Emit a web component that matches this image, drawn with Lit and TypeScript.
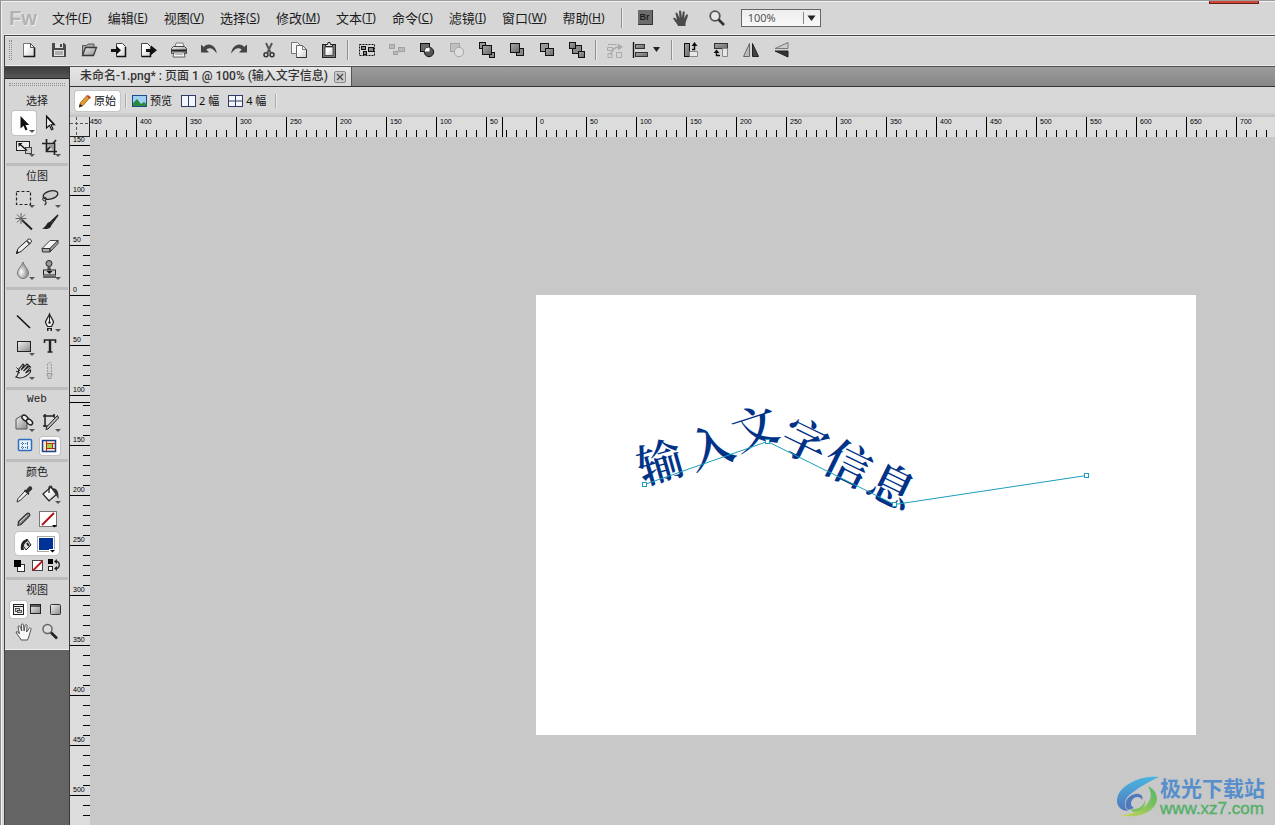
import { LitElement, html, css, svg, SVGTemplateResult, TemplateResult } from "lit";
import { customElement, state } from "lit/decorators.js";

type Art = SVGTemplateResult;

/* ---------- toolbar artwork, 20 x 20 ---------- */
const BAR: Record<string, Art> = {
  new: svg`<path d="M4.5 3.5h7l4 4v9h-11z" fill="url(#paper)" stroke="#777"/><path d="M15.5 7.5v9h-11" fill="none" stroke="#1a1a1a" stroke-width="1.6"/><path d="M11.5 3.5v4h4z" fill="#eee" stroke="#333" stroke-width=".8"/>`,
  save: svg`<path d="M3 3h12l2 2v12H3z" fill="#4a4a4a"/><rect x="6" y="3" width="8" height="5" fill="#ddd"/><rect x="11" y="4" width="2" height="3" fill="#444"/><rect x="5" y="10" width="10" height="6" fill="#e4e4e4"/><path d="M6 12h8M6 14h8" stroke="#777"/>`,
  open: svg`<path d="M3.5 15.5V5.5h4l1.5-1.5h6v3" fill="#aaa" stroke="#555"/><path d="M3.5 15.5l3-8h11l-3 8z" fill="url(#steel)" stroke="#3a3a3a" stroke-width="1.3"/>`,
  import: svg`<path d="M7.5 3.5h6l3 3v10h-9z" fill="url(#paper)" stroke="#444"/><path d="M16.5 7v9.5h-9" fill="none" stroke="#111" stroke-width="1.5"/><path d="M2 9h5V5.5l5 4.8-5 4.7V12H2z" fill="#111"/>`,
  export: svg`<path d="M2.5 3.5h6l3 3v10h-9z" fill="url(#paper)" stroke="#444"/><path d="M11.5 12v4.5h-9" fill="none" stroke="#111" stroke-width="1.5"/><path d="M7 9h5V5.5l6 4.8-6 4.7V12H7z" fill="#111"/>`,
  print: svg`<path d="M6 7l1-4h7l1 4z" fill="#f2f2f2" stroke="#666" stroke-width=".8"/><path d="M2.5 8.500l2-2h11l2 2v5h-15z" fill="url(#steel)" stroke="#444"/><path d="M3 10.5h14" stroke="#222" stroke-width="2"/><path d="M5 12h10l1 5H4z" fill="#f4f4f4" stroke="#444" stroke-width=".8"/><path d="M6 14h8" stroke="#888"/>`,
  undo: svg`<path d="M2 4.5v8h8L7.3 9.6C10.5 6.8 14 8 17.8 13.5 17 6 10 1.5 4.8 7z" fill="#454545"/>`,
  redo: svg`<path d="M18 4.5v8h-8l2.7-2.9C9.5 6.800 6 8 2.2 13.5 3 6 10 1.5 15.2 7z" fill="#454545"/>`,
  cut: svg`<path d="M7 3l4.5 9.5M13 3L8.5 12.5" stroke="#555" stroke-width="1.9"/><circle cx="7" cy="14.8" r="2" fill="none" stroke="#333" stroke-width="1.5"/><circle cx="13" cy="14.8" r="2" fill="none" stroke="#333" stroke-width="1.5"/>`,
  copy: svg`<path d="M2.5 2.5h6l3 3v8h-9z" fill="#f4f4f4" stroke="#777"/><path d="M7.5 5.5h6l4 4v8h-10z" fill="url(#paper)" stroke="#666"/><path d="M17.5 9.5v8h-10" fill="none" stroke="#333"/><path d="M13.5 5.5v4h4" fill="none" stroke="#777"/>`,
  paste: svg`<rect x="3.5" y="4.5" width="13" height="13" fill="#777" stroke="#222"/><path d="M6 7h8v8.500H6z" fill="url(#paper)" stroke="#333" stroke-width=".8"/><path d="M6.5 6.5v-2h2l.5-2h2l.5 2h2v2z" fill="#ddd" stroke="#222"/>`,
  group: svg`<rect x="2.5" y="4.5" width="15" height="11" fill="none" stroke="#111" stroke-dasharray="2 1"/><rect x="4.5" y="6.5" width="4" height="3" fill="#888" stroke="#111"/><rect x="11.5" y="7.5" width="5" height="4" fill="#888" stroke="#111"/><rect x="6.5" y="11.5" width="3" height="3" fill="#888" stroke="#111"/>`,
  ungroup: svg`<g fill="#b9b9b9" stroke="#a2a2a2"><rect x="2.5" y="4.5" width="5" height="4"/><rect x="11.5" y="7.5" width="6" height="4"/><rect x="6.5" y="11.5" width="4" height="3"/></g>`,
  join: svg`<rect x="3.5" y="3.5" width="9" height="8" fill="#6a6a6a" stroke="#111"/><circle cx="12" cy="12" r="4.7" fill="#555" stroke="#111"/><path d="M7.5 11.5A4.7 4.7 0 0 1 12.5 7.5v4z" fill="#fff"/>`,
  split: svg`<rect x="3.5" y="3.5" width="9" height="8" fill="#c0c0c0" stroke="#a4a4a4"/><circle cx="12" cy="12" r="4.7" fill="#dedede" stroke="#a4a4a4"/>`,
  front: svg`<g stroke="#111"><rect x="2.5" y="2.5" width="6" height="6" fill="#999"/><rect x="12.5" y="12.5" width="5" height="5" fill="#888"/><rect x="5.5" y="5.5" width="9" height="9" fill="url(#steel2)"/></g>`,
  forward: svg`<g stroke="#111"><rect x="9.5" y="8.5" width="7" height="7" fill="#888"/><rect x="3.5" y="3.5" width="9" height="9" fill="url(#steel2)"/></g>`,
  backward: svg`<g stroke="#111"><rect x="3.5" y="3.5" width="8" height="8" fill="#999"/><rect x="8.5" y="8.5" width="8" height="7" fill="url(#steel2)"/></g>`,
  back: svg`<g stroke="#111"><rect x="5.5" y="5.5" width="9" height="8" fill="#888"/><rect x="2.5" y="2.5" width="6" height="6" fill="url(#steel2)"/><rect x="11.5" y="11.5" width="6" height="6" fill="url(#steel2)"/></g>`,
  redraw: svg`<g fill="none" stroke="#aaa"><path d="M3 4.5h9M2.5 7.5h5v3h-5zM3 13.5h4v4H3zM11.5 12.5h5v5h-5z"/><path d="M6 15c1-6 4-8 8-8" stroke-width="1.5"/></g><path d="M13 3.5l5 3.5-5 3.5z" fill="#aaa"/>`,
  align: svg`<path d="M3.500 2v16" stroke="#111" stroke-width="1.4"/><rect x="5.5" y="4.5" width="9" height="4" fill="url(#steel2)" stroke="#333"/><rect x="5.5" y="12.5" width="12" height="4" fill="url(#steel2)" stroke="#333"/>`,
  cw: svg`<rect x="3.5" y="3.5" width="5" height="13" fill="url(#steel2)" stroke="#111"/><path d="M8.5 11.5h8v5h-8" fill="#e8e8e8" stroke="#888"/><path d="M11 9.5h2.5V5" fill="none" stroke="#111" stroke-width="1.5"/><path d="M10.5 6l3-4 3 4z" fill="#111"/>`,
  ccw: svg`<rect x="3.5" y="3.5" width="13" height="5" fill="url(#steel2)" stroke="#333"/><path d="M11.5 8.5h5v8h-5z" fill="#e8e8e8" stroke="#888"/><path d="M9 15.5H5.5V12" fill="none" stroke="#111" stroke-width="1.5"/><path d="M2.500 13l3-3.5 3 3.5z" fill="#111"/>`,
  fliph: svg`<path d="M8.5 3.5v13h-6z" fill="#bbb" stroke="#666"/><path d="M11.5 3.5v13h6z" fill="#444" stroke="#222"/>`,
  flipv: svg`<path d="M17 2.5v6H4z" fill="#ccc" stroke="#777"/><path d="M17 17v-6H4z" fill="#333" stroke="#222"/>`,
};

/* ---------- tool palette artwork, 24 x 24 ---------- */
const more = svg`<path d="M17 19h6l-3 3z" fill="#555"/>`;
const TOOL: Record<string, Art> = {
  pointer: svg`<path d="M8.5 5v12.5l3-2.7 2 4.7 2-.9-2-4.6h3.7z" fill="#111"/>${more}`,
  subselect: svg`<path d="M8.5 5v12l3-2.7 2 4.4 1.5-.7-2-4.3h3.5z" fill="#eee" stroke="#111" stroke-width="1.1"/><path d="M9 6l7 7.5" stroke="#111" stroke-width="1.5"/>`,
  scale: svg`<rect x="4.5" y="6.5" width="13" height="9" fill="#ececec" stroke="#222"/><rect x="13.5" y="12.5" width="6" height="6" fill="#ccc" stroke="#444"/><path d="M7 8.5l8 7" stroke="#111" stroke-width="1.3"/><path d="M6.5 8v4l4-4z" fill="#111"/>${more}`,
  crop: svg`<path d="M8.5 4v12.5H19M4 8.5h12.5V20M8 16.5L18 5" fill="none" stroke="#222" stroke-width="1.7"/><path d="M9 9h7v7z" fill="#999"/>${more}`,
  marquee: svg`<rect x="4.5" y="5.5" width="14" height="13" fill="none" stroke="#222" stroke-width="1.2" stroke-dasharray="3 2"/>${more}`,
  lasso: svg`<ellipse cx="12.5" cy="9" rx="7.5" ry="4" transform="rotate(-14 12.5 9)" fill="#ccc" stroke="#222" stroke-width="1.3"/><circle cx="6.5" cy="13" r="1.8" fill="none" stroke="#222"/><path d="M7 15c2 1 1 3-.5 4" fill="none" stroke="#222" stroke-width="1.2"/>${more}`,
  wand: svg`<path d="M10 10l10 9.5" stroke="#222" stroke-width="2"/><path d="M9 3v11M3.5 8.500h11M5 4.5l8 8M13 4.5l-8 8" stroke="#555" stroke-width=".9"/>`,
  brush: svg`<path d="M20 5l-8 7.5 1.5 1.5z" fill="#777" stroke="#222" stroke-width="1.3"/><path d="M12 12c-4 0-3 5-8 6.5 5 1.500 10-.5 9.500-4.5z" fill="#222"/>`,
  pencil: svg`<path d="M4.5 19.5l1.5-5L16 5.5c2-1.500 4.500 1 3 3L9 17.500z" fill="#eee" stroke="#222"/><path d="M4 20l1-3.5 2 2z" fill="#111"/><path d="M15 7l3 3" stroke="#333" stroke-width="1.500"/>`,
  eraser: svg`<path d="M4 14.5L12 6.5h8l-8 8z" fill="#f4f4f4" stroke="#444"/><path d="M4 14.5h8V18H4.500zM12 14.500l8-8v3L12 18z" fill="#aaa" stroke="#333"/>`,
  blur: svg`<path d="M11 4c1 4 5.5 7 5.5 11a5.5 5.500 0 0 1-11 0C5.5 11 10 8 11 4z" fill="url(#drop)" stroke="#777"/>${more}`,
  stamp: svg`<circle cx="11" cy="5.5" r="3" fill="#999" stroke="#222"/><path d="M9.8 8.5h2.4L13 12H9z" fill="#555"/><rect x="5.5" y="12" width="12" height="5" fill="#ccc" stroke="#222"/><path d="M8.500 13h6l-3 3z" fill="#111"/><path d="M5 19h13" stroke="#222" stroke-width="1.3"/>${more}`,
  line: svg`<path d="M5 5.5L18 18" stroke="#111" stroke-width="1.6"/>`,
  pen: svg`<path d="M11.5 4C10 8 7.500 10 7.500 12.500l2 4h4l2-4C15.500 10 13 8 11.5 4z" fill="#eee" stroke="#222" stroke-width="1.2"/><path d="M11.500 5v7" stroke="#222"/><circle cx="11.5" cy="12.5" r="1.2" fill="#222"/><path d="M9 18v3h1.500v-2h2v2H14v-3z" fill="#222"/>${more}`,
  rect: svg`<rect x="5.500" y="7.500" width="13" height="10" fill="url(#steel)" stroke="#222"/>${more}`,
  text: svg`<path d="M6.500 9V6h11v3M9.500 18h5" stroke="#222" stroke-width="1.6" fill="none"/><path d="M12 6v12" stroke="#222" stroke-width="2.4"/>`,
  freeform: svg`<path d="M4 19c3-2 2-6 3-8l4-5 1 1-3 5 6-6 1.500 1-5 6 6-5 1 1-5 6 5-3v2c-4 5-7 6-11 6z" fill="#ddd" stroke="#222" stroke-width="1.1"/><path d="M4.500 9.500l3.500 3.500M4 13l4 2" stroke="#222"/>${more}`,
  knife: svg`<path d="M9.500 6.500c0-2 4-3 4-1v10h-4z" fill="#d0d0d0" stroke="#9a9a9a" stroke-dasharray="2 1"/><path d="M9 15.500h5v2h-1v3h-3v-3H9z" fill="#ccc" stroke="#9a9a9a"/>`,
  hotspot: svg`<path d="M4 9l5-3 3 1v4h3v8H4z" fill="url(#steel)" stroke="#555"/><ellipse cx="13" cy="8" rx="3.5" ry="2.3" transform="rotate(40 13 8)" fill="#eee" stroke="#222" stroke-width="1.4"/><ellipse cx="17.5" cy="12" rx="3.5" ry="2.3" transform="rotate(40 17.5 12)" fill="#eee" stroke="#222" stroke-width="1.4"/>${more}`,
  slice: svg`<path d="M5 6h12M7 4v13M5 16h5M16 4v4" stroke="#222" stroke-width="1.5"/><path d="M8 7h8l-7 8z" fill="#ddd"/><path d="M19.500 5.500l1 2.500L10 19l-2 .5.500-2.500z" fill="#bbb" stroke="#222"/>${more}`,
  hidehot: svg`<rect x="6.500" y="5.500" width="13" height="11" rx="1" fill="#e9f3fb" stroke="#2f6fc0" stroke-width="1.5"/><path d="M9 9.500h8M9 13.500h8M10.500 8v7M15.500 8v7" stroke="#3d6d9c" stroke-dasharray="1 1"/>`,
  showhot: svg`<rect x="4.500" y="6.500" width="13" height="11" fill="#f4e9c9" stroke="#1f3f8c" stroke-width="1.5"/><path d="M8.500 7v10M14.500 9v6M9 9.500h8M9 14.500h8" stroke="#b02a1c"/><rect x="9" y="10" width="5" height="4" fill="#a5cf4b"/>`,
  dropper: svg`<path d="M5 20l1-3.500 7-7.500 2.500 2.500-7.500 7z" fill="#eee" stroke="#333"/><path d="M12 8.500l4.500 4.500 1-1.500-.7-1L20 7.500c1-2-1-4-3-3L14 8l-1-.5z" fill="#333"/>`,
  bucket: svg`<path d="M5 12l8-7 6 7-8 7z" fill="url(#paper)" stroke="#222" stroke-width="1.2"/><path d="M11 11V5.500c0-2 3-2 3 0" fill="none" stroke="#222" stroke-width="1.2"/><path d="M13 6c6 0 8 3 7.500 11L18 13z" fill="#333"/>${more}`,
  stroke: svg`<path d="M6 18.500l.5-4L15 6.500c2-1 3.500.5 2.500 2.500L9 17.500z" fill="#8a8a8a" stroke="#333" stroke-width="1.2"/><path d="M8 15l7-6.500" stroke="#ddd"/>`,
  nostroke: svg`<rect x="1.500" y="4.500" width="17" height="15" fill="#fff" stroke="#777"/><path d="M4 18L16 6" stroke="#b5121b" stroke-width="2"/><path d="M14 18h5l-2.500 2.500z" fill="#000"/>`,
  fill: svg`<path d="M8 12l5-5 4 6-5 5z" fill="#ddd" stroke="#222"/><path d="M7 18c-1-7 2-10 6-11l1 2c-4 2-5 5-4 9z" fill="#222"/><path d="M13 11l2 3" stroke="#222" stroke-width="2"/>`,
  fillcolor: svg`<rect x="1.500" y="4.500" width="17" height="15" fill="#fff" stroke="#aaa"/><rect x="3" y="6" width="14" height="12" fill="#003399"/><path d="M13 17h6v4h-6z" fill="#fff"/><path d="M14 18h5l-2.500 2.500z" fill="#000"/>`,
  default: svg`<rect x="5.500" y="7.500" width="7" height="7" fill="#fff" stroke="#333"/><rect x="2" y="3" width="7" height="7" fill="#000"/>`,
  none: svg`<rect x="3.500" y="3.500" width="10" height="10" fill="#fff" stroke="#444"/><path d="M4 13.500L13.500 4" stroke="#c01818" stroke-width="1.8"/>`,
  swap: svg`<rect x="2" y="2" width="5" height="5" fill="#000"/><rect x="2.500" y="9.500" width="4" height="4" fill="#fff" stroke="#222"/><path d="M9.500 4.500c5-1 5 7 0 7" fill="none" stroke="#222" stroke-width="1.3"/><path d="M11 2v5L8 4.500zM11 9v5l-3-2.500z" fill="#222"/>`,
  screen1: svg`<rect x="3.500" y="3.500" width="10" height="10" fill="#eee" stroke="#222"/><path d="M4 5.500h9" stroke="#222"/><rect x="5.500" y="7.500" width="4" height="3" fill="#ccc" stroke="#333" stroke-width=".8"/><rect x="7.500" y="9.500" width="4" height="2" fill="#ccc" stroke="#333" stroke-width=".8"/>`,
  screen2: svg`<rect x="3.500" y="3.500" width="10" height="9" fill="url(#steel)" stroke="#222"/><path d="M4 5h9" stroke="#333" stroke-width="1.5"/>`,
  screen3: svg`<rect x="3.500" y="3.500" width="10" height="10" rx="1" fill="url(#steel)" stroke="#333"/>`,
  hand: svg`<path d="M9 20c-1-3-4-5-5-8 1.500-1 2.500.5 3.500 2L6 7c0-1.500 1.800-1.500 2.200 0l1.600 4-.5-6c0-1.500 2-1.500 2.200 0l.6 6 1-5.500c.3-1.400 2.100-1 2 .5l-.5 6 2.500-3.500c.7-1.300 2.200-.6 1.900 1L17 16l-1.500 4z" fill="#f8f8f8" stroke="#555" stroke-width="1"/>`,
  zoom: svg`<circle cx="9.500" cy="9" r="4.500" fill="#ddd" stroke="#666" stroke-width="1.500"/><path d="M13 12.500l6 6" stroke="#222" stroke-width="2.600"/>`,
};

interface ToolDef { icon: string; name: string; on?: boolean }
interface Section { title: string; cls: string; rows: ToolDef[][] }
const t = (icon: string, name: string, on = false): ToolDef => ({ icon, name, on });

const SECTIONS: Section[] = [
  { title: "选择", cls: "pick", rows: [[t("pointer", "指针", true), t("subselect", "部分选定")], [t("scale", "缩放"), t("crop", "裁剪")]] },
  { title: "位图", cls: "bitmap", rows: [[t("marquee", "选取框"), t("lasso", "套索")], [t("wand", "魔术棒"), t("brush", "刷子")], [t("pencil", "铅笔"), t("eraser", "橡皮擦")], [t("blur", "模糊"), t("stamp", "橡皮图章")]] },
  { title: "矢量", cls: "vector", rows: [[t("line", "直线"), t("pen", "钢笔")], [t("rect", "矩形"), t("text", "文本")], [t("freeform", "自由变形"), t("knife", "刀子")]] },
  { title: "Web", cls: "web", rows: [[t("hotspot", "热点"), t("slice", "切片")], [t("hidehot", "隐藏切片"), t("showhot", "显示切片", true)]] },
  { title: "颜色", cls: "colour", rows: [[t("dropper", "滴管"), t("bucket", "油漆桶")], [t("stroke", "笔触"), t("nostroke", "笔触颜色")], [t("fill", "填充"), t("fillcolor", "填充颜色")], [t("default", "默认颜色"), t("none", "无"), t("swap", "交换颜色")]] },
  { title: "视图", cls: "view", rows: [[t("screen1", "标准屏幕", true), t("screen2", "带菜单的全屏"), t("screen3", "全屏")], [t("hand", "手形"), t("zoom", "缩放")]] },
];

const MENUS: [string, string][] = [
  ["文件", "F"], ["编辑", "E"], ["视图", "V"], ["选择", "S"], ["修改", "M"],
  ["文本", "T"], ["命令", "C"], ["滤镜", "I"], ["窗口", "W"], ["帮助", "H"],
];

const BAR_GROUPS: [string, string][][] = [
  [["new", "新建"], ["save", "保存"], ["open", "打开"], ["import", "导入"], ["export", "导出"], ["print", "打印"], ["undo", "撤消"], ["redo", "重做"], ["cut", "剪切"], ["copy", "复制"], ["paste", "粘贴"]],
  [["group", "分组"], ["ungroup", "取消分组"], ["join", "接合"], ["split", "拆分"], ["front", "移到最前"], ["forward", "上移"], ["backward", "下移"], ["back", "移到最后"]],
  [["redraw", "重绘路径"], ["align", "对齐"]],
  [["cw", "顺时针旋转"], ["ccw", "逆时针旋转"], ["fliph", "水平翻转"], ["flipv", "垂直翻转"]],
];

/* ruler labels, one per 50 px cell */
const steps = (from: number, count: number) =>
  Array.from({ length: Math.max(count, 0) }, (_, i) => Math.abs(from + i * 50));

/* glyph, centre x, centre y, angle on the canvas */
const PATH_TEXT: [string, number, number, number][] = [
  ["输", 124, 167, -16], ["入", 175, 152, -17], ["文", 219, 133, -18],
  ["字", 269, 146, 26], ["信", 312, 169, 26], ["息", 356, 191, 26],
];
const ANCHORS: [number, number][] = [[108, 189], [231, 146], [358, 209], [550, 180]];

@customElement("app-root")
export class AppRoot extends LitElement {
  @state() private view = "原始";
  @state() private winW = window.innerWidth;
  @state() private winH = window.innerHeight;

  private onResize = () => { this.winW = window.innerWidth; this.winH = window.innerHeight; };
  connectedCallback() { super.connectedCallback(); window.addEventListener("resize", this.onResize); }
  disconnectedCallback() { window.removeEventListener("resize", this.onResize); super.disconnectedCallback(); }

  static styles = css`
    :host {
      display: flex; flex-direction: column; height: 100vh; position: relative;
      background: #d6d6d6; color: #1c1c1c; overflow: hidden; box-sizing: border-box;
      border-top: 1px solid #9d9d9d; border-left: 1px solid #8f8f8f; padding-left: 3px;
      font: 11px/18px "Noto Sans", "Noto Sans CJK SC", sans-serif;
      box-shadow: inset 1px 1px 0 #f2f2f2;
    }
    button { font: inherit; color: inherit; background: none; border: 0; padding: 0; margin: 0; display: flex; align-items: center; justify-content: center; }
    svg { display: block; flex: none; }
    .defs { position: absolute; }
    .close { position: absolute; top: 0; right: 16px; width: 50px; height: 3px; background: #d0483a; border: solid #6a201a; border-width: 0 1px 1px; box-sizing: border-box; }

    .menubar { display: flex; align-items: center; height: 34px; flex: none; box-sizing: border-box; padding-left: 5px; border-bottom: 1px solid #f2f2f2; }
    .logo { font: bold 20px/24px "Liberation Sans", sans-serif; color: #b2b2b2; width: 43px; text-shadow: 1px 1px 0 #eee; }
    .menus { display: flex; gap: 16px; }
    .menus button { font-size: 13px; line-height: 20px; white-space: nowrap; }
    .key { font-size: 12px; }
    .sep { width: 1px; height: 20px; background: #8f8f8f; box-shadow: 1px 0 0 #ececec; flex: none; }
    .menubar .sep { margin-left: 16px; }
    .apps { display: flex; gap: 16px; margin: 0 14px 0 14px; }
    .br { display: block; width: 15px; height: 15px; background: #6c6c6c; color: #1e1e1e; font: bold 9px/15px "Liberation Sans", sans-serif; text-align: center; margin: 3px 2px; border-right: 1px solid #333; border-bottom: 1px solid #333; box-sizing: border-box; }
    .zoom { position: relative; width: 80px; height: 18px; }
    .zoom select { appearance: none; width: 100%; height: 18px; border: 1px solid #666; border-radius: 0; background: linear-gradient(#eee, #f8f8f8); font: 11px/16px "Noto Sans", sans-serif; color: #555; padding: 0 0 0 6px; margin: 0; display: block; box-sizing: border-box; }
    .zoom svg { position: absolute; right: 1px; top: 1px; pointer-events: none; }

    .frame { flex: 1; min-height: 0; display: flex; flex-direction: column; border-left: 1px solid #444; border-top: 1px solid #444; }
    .toolbar { display: flex; align-items: center; height: 31px; box-sizing: border-box; flex: none; padding: 0 0 2px 4px; border-bottom: 1px solid #505050; box-shadow: inset 0 1px 0 #ececec, inset 0 -1px 0 #ececec; }
    .grip { width: 1px; height: 20px; border: dotted #8d8d8d; border-width: 0 1px; margin-right: 2px; }
    .group { display: flex; }
    .group button { width: 30px; height: 26px; }
    .group .wide { width: 38px; justify-content: flex-start; gap: 1px; }
    .toolbar .sep { margin: 0 4px 0 3px; }

    .body { flex: 1; min-height: 0; display: flex; }
    .side { width: 64px; flex: none; background: #646464; border-right: 1px solid #3a3a3a; display: flex; flex-direction: column; }
    .cap { height: 11px; background: linear-gradient(#3c3c3c, #575757); border-bottom: 1px solid #222; flex: none; }
    .palette { background: #d6d6d6; border-bottom: 1px solid #f0f0f0; padding-top: 4px; }
    .dots { height: 1px; margin: 0 4px 5px; border: dotted #8d8d8d; border-width: 1px 0; }
    .section { display: flex; flex-direction: column; align-items: center; border-bottom: 3px solid #bdbdbd; padding-bottom: 5px; margin: 0 1px; }
    .section.pick { padding-bottom: 4px; }
    .section.web { padding-bottom: 1px; }
    .section.colour { padding-bottom: 3px; }
    .section.view { border: 0; }
    .section h2 { margin: 0 0 2px; height: 18px; font: 11px/18px "Noto Sans CJK SC", sans-serif; }
    .section.web h2 { font-family: "Liberation Mono", monospace; }
    .row { display: flex; height: 24px; align-items: center; }
    .row button { width: 24px; height: 24px; margin: 0 1px; border-radius: 3px; }
    .row .on { background: #fff; box-shadow: 0 0 0 1px #c2c2c2; }
    .web .row .on { height: 18px; width: 20px; margin: 0 3px; }
    .colour .row { height: 25px; }
    .colour .row:nth-of-type(1) { height: 24px; }
    .colour .picked { background: #fff; border-radius: 4px; box-shadow: 0 0 0 1px #c4c4c4; height: 23px; margin: 1px 0; }
    .colour .picked button { margin: 0; width: 22px; }
    .row.three { height: 20px; }
    .colour .row.three { height: 18px; }
    .row.three button { width: 17px; height: 17px; margin: 0; }
    .view .three { height: 19px; margin-bottom: 1px; }
    .view .three button:last-child { margin-left: 3px; }

    .main { flex: 1; min-width: 0; display: flex; flex-direction: column; }
    .tabs { height: 19px; flex: none; display: flex; background: linear-gradient(#9c9c9c, #868686); border-bottom: 1px solid #333; }
    .tab { display: flex; align-items: center; gap: 6px; padding: 0 5px 0 10px; background: linear-gradient(#e6e6e6, #d6d6d6); border-right: 1px solid #555; font: 500 12px/19px Roboto, "Noto Sans CJK SC", sans-serif; color: #333; white-space: nowrap; }
    .tab button { width: 12px; height: 12px; border: 1px solid #8a8a8a; border-radius: 2px; background: #ccc; box-sizing: border-box; }
    .views { height: 30px; flex: none; display: flex; align-items: center; padding: 0 0 2px 5px; background: linear-gradient(#d8d8d8 25px, #c0c0c0); box-sizing: border-box; }
    .views button { height: 20px; gap: 3px; padding: 0 4px; margin-right: 1px; border-radius: 3px; font: 11px/20px "Noto Sans", "Noto Sans CJK SC", sans-serif; white-space: nowrap; color: #111; }
    .views .on { background: #fff; box-shadow: 0 0 0 1px #c6c6c6; }
    .views .sep { height: 14px; margin: 0 2px 0 4px; background: #aaa; }

    .work { flex: 1; min-height: 0; display: grid; grid-template: 20px 1fr / 20px 1fr; }
    .corner { background: #dcdcdc; border-right: 1px solid #222; border-bottom: 1px solid #222; }
    .rulerx, .rulery { background: #dcdcdc; overflow: hidden; display: flex; min-width: 0; min-height: 0; position: relative; font: 7px/9px "Liberation Sans", sans-serif; color: #000; }
    .rulerx ol, .rulery ol { list-style: none; margin: 0; padding: 0; display: flex; }
    .rulerx ol { margin-left: -4px; }
    .rulerx li { width: 50px; flex: none; box-sizing: border-box; border-left: 1px solid #000; padding-left: 3px; background: repeating-linear-gradient(90deg, transparent 0 9px, #000 9px 10px) 0 100% / 45px 7px no-repeat; }
    .rulery ol { margin-top: -41px; flex-direction: column; width: 100%; }
    .rulery li { height: 50px; flex: none; box-sizing: border-box; border-bottom: 1px solid #000; padding: 39px 0 0 3px; background: repeating-linear-gradient(#0000 0 9px, #000 9px 10px) 100% 0 / 7px 45px no-repeat; }
    .markx { position: absolute; left: 412px; top: 0; width: 1px; height: 20px; background: #000; }
    .marky { position: absolute; top: 265px; left: 0; width: 20px; height: 1px; background: #000; }
    .canvas { background: #c8c8c8; position: relative; overflow: hidden; }
    .page { position: absolute; left: 446px; top: 158px; width: 660px; height: 440px; background: #fff; }
    .glyph { font: 600 46px "Noto Serif CJK SC", "Noto Sans CJK SC", serif; fill: #003388; }
    .brand { position: absolute; right: 10px; bottom: 7px; display: flex; align-items: center; gap: 1px; }
    .brand b { display: block; font: bold 21px/25px "Noto Sans CJK SC", sans-serif; color: #568fcb; }
    .brand span { display: block; font: 17px/18px "Liberation Sans", sans-serif; color: #52b069; -webkit-text-stroke: 0.4px #52b069; }
  `;

  private tool(d: ToolDef, small: boolean): TemplateResult {
    const box = small ? "0 0 17 17" : "0 0 24 24";
    const size = small ? 17 : 24;
    return html`<button class=${d.on ? "on" : ""} title=${d.name} aria-label=${d.name}>
      <svg width=${size} height=${size} viewBox=${box}>${TOOL[d.icon]}</svg></button>`;
  }

  private section(s: Section): TemplateResult {
    return html`<section class="section ${s.cls}"><h2>${s.title}</h2>
      ${s.rows.map((r) => html`<div class="row ${r.length === 3 ? "three" : ""} ${r[0].icon === "fill" ? "picked" : ""}">
        ${r.map((d) => this.tool(d, r.length === 3))}</div>`)}
    </section>`;
  }

  private viewButton(name: string, art: Art, width = 15): TemplateResult {
    return html`<button class=${this.view === name ? "on" : ""} @click=${() => (this.view = name)}>
      <svg width=${width} height="14" viewBox="0 0 ${width} 14">${art}</svg>${name}</button>`;
  }

  render() {
    const xs = steps(-450, Math.ceil((this.winW - 86) / 50));
    const ys = steps(-150, Math.floor((this.winH - 96) / 50));
    return html`
      <svg class="defs" width="0" height="0" aria-hidden="true"><defs>
        <linearGradient id="paper" x2="1" y2="1"><stop offset=".3" stop-color="#fff"/><stop offset="1" stop-color="#ccc"/></linearGradient>
        <linearGradient id="steel" x2="1" y2="1"><stop stop-color="#f2f2f2"/><stop offset="1" stop-color="#8a8a8a"/></linearGradient>
        <linearGradient id="steel2" x2="1" y2="1"><stop stop-color="#a5a5a5"/><stop offset="1" stop-color="#6a6a6a"/></linearGradient>
        <radialGradient id="drop" cx=".35" cy=".6"><stop stop-color="#fff"/><stop offset="1" stop-color="#999"/></radialGradient>
        <linearGradient id="swirlA" x2="0" y2="1"><stop stop-color="#4bb4e0"/><stop offset="1" stop-color="#4f78bd"/></linearGradient>
        <linearGradient id="swirlB" x1="1" x2="0" y2="1"><stop stop-color="#4fb36a"/><stop offset="1" stop-color="#c8d850"/></linearGradient>
      </defs></svg>
      <div class="close"></div>

      <header class="menubar">
        <div class="logo">Fw</div>
        <nav class="menus">
          ${MENUS.map(([n, k]) => html`<button>${n}<span class="key">(<u>${k}</u>)</span></button>`)}
        </nav>
        <div class="sep"></div>
        <div class="apps">
          <button aria-label="Bridge"><span class="br">Br</span></button>
          <button aria-label="手形"><svg width="20" height="20" viewBox="0 0 20 20"><path d="M7 18c-1-3-4-5-5-8 1.500-1 3 .5 4 2L4.500 5.500c0-1.500 1.500-1.500 2 0L8.500 10 8 3.500c0-1.500 2-1.500 2.200 0l.6 6 1-5.500c.3-1.400 2-1 1.900.5l-.4 6L15 7c.7-1.300 2.200-.6 1.900 1L14.500 15v3z" fill="#4a4a4a"/></svg></button>
          <button aria-label="缩放"><svg width="20" height="20" viewBox="0 0 20 20"><circle cx="8" cy="8" r="4.800" fill="#e6e6e6" stroke="#555" stroke-width="1.800"/><path d="M11.500 11.500L17 17" stroke="#333" stroke-width="2.600"/></svg></button>
        </div>
        <div class="zoom">
          <select aria-label="缩放比例"><option>100%</option></select>
          <svg width="18" height="16" viewBox="0 0 18 16"><path d="M1.500 2v12" stroke="#888"/><path d="M5.500 5.500h8L9.500 11z" fill="#222"/></svg>
        </div>
      </header>

      <div class="frame">
        <div class="toolbar">
          <div class="grip"></div>
          ${BAR_GROUPS.map((g, i) => html`${i ? html`<div class="sep"></div>` : ""}<div class="group">
            ${g.map(([k, n]) => html`<button class=${k === "align" ? "wide" : ""} title=${n} aria-label=${n}>
              <svg width="20" height="20" viewBox="0 0 20 20">${BAR[k]}</svg>
              ${k === "align" ? html`<svg width="10" height="6" viewBox="0 0 10 6"><path d="M2 0h7L5.500 5z" fill="#222"/></svg>` : ""}
            </button>`)}</div>`)}
        </div>

        <div class="body">
          <aside class="side">
            <div class="cap"></div>
            <div class="palette"><div class="dots"></div>${SECTIONS.map((s) => this.section(s))}</div>
          </aside>

          <main class="main">
            <div class="tabs"><div class="tab"><span>未命名-1.png* : 页面 1 @ 100% (输入文字信息)</span>
              <button aria-label="关闭"><svg width="8" height="8" viewBox="0 0 8 8"><path d="M1 1l6 6M7 1L1 7" stroke="#444" stroke-width="1.200"/></svg></button></div></div>
            <div class="views">
              ${this.viewButton("原始", svg`<path d="M0 13l1.500-4.500L8 1.500l2.500 2.500L4 11.500z" fill="#e59a2c" stroke="#8a5a1a" stroke-width=".8"/><path d="M8 2l1-1 3 2.500-1.500 1.500z" fill="#c0392b"/><path d="M0 13.500l1-3.500 2.500 2z" fill="#222"/>`, 12)}
              <div class="sep"></div>
              ${this.viewButton("预览", svg`<rect x=".5" y="1.500" width="14" height="11" fill="#9fd0f4" stroke="#1d4b8c"/><path d="M1 9l4-4 4 5 3-2 2.500 2v2H1z" fill="#2c8a3c"/>`)}
              ${this.viewButton("2 幅", svg`<rect x=".5" y="1.500" width="14" height="11" fill="#f4f6fb" stroke="#2b3d63"/><path d="M7.500 2v10" stroke="#2b3d63"/>`)}
              ${this.viewButton("4 幅", svg`<rect x=".5" y="1.500" width="14" height="11" fill="#f4f6fb" stroke="#2b3d63"/><path d="M7.500 2v10M1 7h13" stroke="#2b3d63"/>`)}
              <div class="sep"></div>
            </div>
            <div class="work">
              <div class="corner"><svg width="19" height="19"><path d="M6.500 0v19M0 6.500h19" stroke="#555" stroke-dasharray="3 2"/></svg></div>
              <div class="rulerx"><ol>${xs.map((n) => html`<li>${n}</li>`)}</ol><div class="markx"></div></div>
              <div class="rulery"><ol>${ys.map((n) => html`<li>${n}</li>`)}<li></li></ol><div class="marky"></div></div>
              <div class="canvas">
                <div class="page">
                  <svg width="660" height="440" viewBox="0 0 660 440">
                    ${PATH_TEXT.map(([c, x, y, a]) => svg`<text class="glyph" text-anchor="middle" transform="translate(${x} ${y}) rotate(${a})" y="17">${c}</text>`)}
                    <polyline points="108.500,189.500 231.500,146.500 358.500,209.500 550.500,180.500" fill="none" stroke="#1c9fbd"/>
                    ${ANCHORS.map(([x, y]) => svg`<rect x=${x - 1.5} y=${y - 1.5} width="4" height="4" fill="#fff" stroke="#1c9fbd"/>`)}
                  </svg>
                </div>
                <div class="brand">
                  <svg width="43" height="42" viewBox="0 0 43 42">
                    <path d="M43 1C24-1 1 10 1 25c0 6 5 10 11 10-5-4-4-13 4-18C25 10 34 5 43 1z" fill="url(#swirlA)"/>
                    <path d="M12 34c-5-5-2-14 7-16 5-1 9 2 7 6-1-3-5-4-8-2-4 3-4 8 0 10z" fill="#4f78bd"/>
                    <path d="M32 10c10 5 12 16 4 23C28 40 14 42 4 39c10 0 18-3 24-8 7-6 9-13 4-21z" fill="url(#swirlB)"/>
                    <path d="M14 33c6 1 13-1 15-9 1 7-4 12-12 12z" fill="#7cc35e"/>
                  </svg>
                  <div><b>极光下载站</b><span>www.xz7.com</span></div>
                </div>
              </div>
            </div>
          </main>
        </div>
      </div>
    `;
  }
}
